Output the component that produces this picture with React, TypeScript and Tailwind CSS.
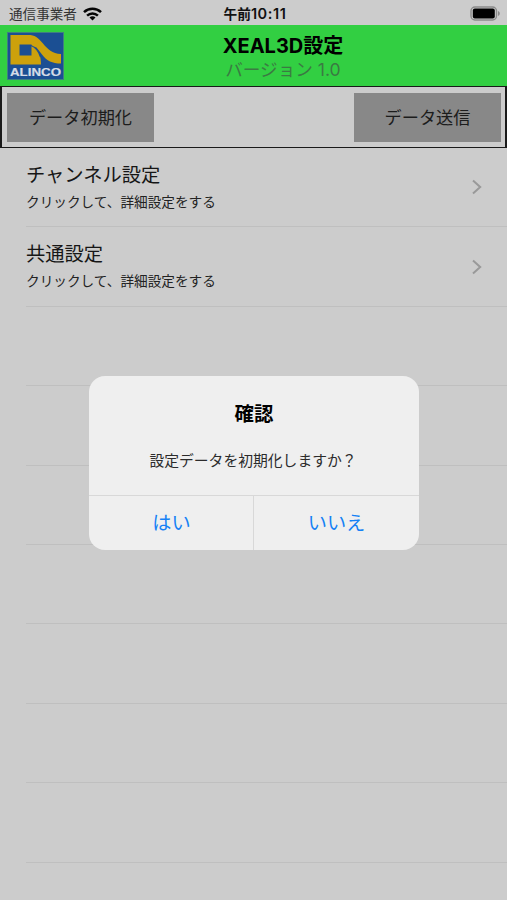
import React, { useState } from 'react';

interface MenuRow {
  title: string;
  detail: string;
}

const rows: (MenuRow | null)[] = [
  { title: 'チャンネル設定', detail: 'クリックして、詳細設定をする' },
  { title: '共通設定', detail: 'クリックして、詳細設定をする' },
  null, null, null, null, null, null, null,
];

const WifiIcon = () => (
  <svg className="w-[19px] h-[14px] ml-[6px]" viewBox="0 0 19 14" fill="none" stroke="#050505" strokeWidth="2.5">
    <path d="M1 5.2C5.8.7 13.2.7 18 5.2" />
    <path d="M4.1 8.6C7.2 5.7 11.8 5.7 14.9 8.6" />
    <path d="M9.5 13.4 6.5 10.4C8.2 8.9 10.8 8.9 12.5 10.4Z" fill="#050505" stroke="none" />
  </svg>
);

const BatteryIcon = () => (
  <svg className="w-[31px] h-[15px]" viewBox="0 0 31 15">
    <rect x="1" y="1" width="25.5" height="13" rx="4" fill="none" stroke="#8a8a8a" strokeWidth="1.4" />
    <rect x="2.8" y="2.6" width="22" height="9.8" rx="2" fill="#000" />
    <path d="M28 5v5c1.1-.5 1.8-1.4 1.8-2.5S29.1 5.5 28 5Z" fill="#8a8a8a" />
  </svg>
);

const Logo = () => (
  <svg className="w-[57px] h-[48px]" viewBox="0 0 57 48">
    <rect x=".5" y=".5" width="56" height="47" fill="#1b4f93" stroke="#3f7f80" />
    <path
      d="M3.5 3H21C28 3 31 5.5 36 11.5 41 17.5 45 21.5 54 22V31.5C45 31.5 40 29 35 22.5L29.5 15.5 26.5 14.5C32 18.5 34 24 34 32.5H3.5Z"
      fill="#cda10c"
    />
    <path d="M12.5 12.5H24.5V23.5H12.5Z" fill="#1b4f93" />
    <path d="M24 13.500C28 15 31.5 19 33.500 25" stroke="#1b4f93" strokeWidth="1.2" fill="none" />
    <text x="3" y="43.5" textLength="51" lengthAdjust="spacingAndGlyphs" fontFamily="Liberation Sans, sans-serif" fontWeight="700" fontSize="11" fill="#d5dce6" stroke="#d5dce6" strokeWidth=".2">
      ALINCO
    </text>
  </svg>
);

const Chevron = () => (
  <svg className="w-[10px] h-[16px]" viewBox="0 0 10 16" fill="none" stroke="#999999" strokeWidth="2">
    <path d="M1 1.5 8.2 8 1 14.5" />
  </svg>
);

const StatusBar = () => (
  <div className="h-[25px] grid grid-cols-3 items-center pt-[2px] pl-[9px] pr-[6px] text-[#111]">
    <div className="flex items-center">
      <span className="text-[13.6px] leading-5 text-[#333] whitespace-nowrap">通信事業者</span>
      <WifiIcon />
    </div>
    <span className="text-center text-[13.7px] font-semibold leading-5">
      午前<span className="text-[14.5px] tracking-[0.6px]">10:11</span>
    </span>
    <div className="flex justify-end">
      <BatteryIcon />
    </div>
  </div>
);

const ConfirmDialog: React.FC<{ onClose: () => void }> = ({ onClose }) => (
  <div className="absolute left-[89px] top-[376px] w-[330px] h-[174px] rounded-[16px] bg-[#efefef] flex flex-col overflow-hidden text-center">
    <div className="flex-1">
      <h2 className="mt-[23px] text-[19.4px] leading-[30px] font-bold text-black">確認</h2>
      <p className="mt-[19px] mr-[2px] text-[14.8px] leading-[26px] text-[#2b2b2b]">設定データを初期化しますか？</p>
    </div>
    <div className="h-[55px] flex border-t border-[#d8d8d8] text-[19.2px] text-[#1581f5]">
      <button onClick={onClose} className="w-[165px] border-r border-[#d8d8d8] pl-px">はい</button>
      <button onClick={onClose} className="flex-1">いいえ</button>
    </div>
  </div>
);

const App: React.FC = () => {
  const [confirming, setConfirming] = useState(true);

  return (
    <div className="relative w-[507px] h-[900px] overflow-hidden bg-[#cccccc] font-['Inter','Noto_Sans_CJK_JP',sans-serif]" lang="ja">
      <StatusBar />

      <header className="h-[61px] flex items-start bg-[#32cf42] px-[7px] pt-[7px]">
        <Logo />
        <div className="flex-1 pt-px text-center">
          <h1 className="ml-[2px] text-[20px] leading-[26px] font-bold text-black">XEAL3D設定</h1>
          <p className="ml-[2px] text-[17.6px] leading-[22px] text-[#3b7a43]">バージョン 1.0</p>
        </div>
      </header>

      <div className="h-[62px] flex items-center justify-between border-y border-x-2 border-[#1a1a1a] pl-[5px] pr-[4px]">
        <button onClick={() => setConfirming(true)} className="w-[147px] h-[49px] pt-[2px] bg-[#888888] text-[17.2px] text-[#1c1c1c]">
          データ初期化
        </button>
        <button className="w-[147px] h-[49px] pt-[2px] bg-[#888888] text-[17.2px] text-[#1c1c1c]">データ送信</button>
      </div>

      <ul>
        {rows.map((row, i) => (
          <li key={i} className="ml-[26px] h-[79.4px] flex items-center justify-between border-b border-[#bfbfbf] pr-[25px]">
            {row && (
              <>
                <div className="pt-px">
                  <div className="text-[19.3px] leading-[28px] text-[#161616]">{row.title}</div>
                  <div className="text-[13.65px] leading-[26px] text-[#222]">{row.detail}</div>
                </div>
                <Chevron />
              </>
            )}
          </li>
        ))}
      </ul>

      {confirming && <ConfirmDialog onClose={() => setConfirming(false)} />}
    </div>
  );
};

export default App;
